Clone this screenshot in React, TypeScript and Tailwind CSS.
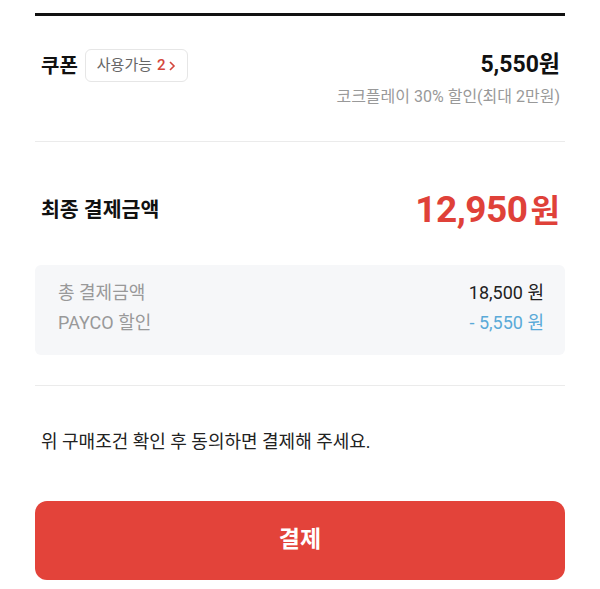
export default function App() {
  return (
    <div
      className="min-h-[589px] bg-white px-[35px] pt-[13px] text-[#111]"
      style={{ fontFamily: "Roboto, 'Noto Sans CJK KR', sans-serif" }}
    >
      <div className="h-[3px] bg-[#111]" />

      {/* Coupon */}
      <div className="pl-[6px] pr-[5px] pt-[33px]">
        <div className="flex h-[33px] items-center justify-between">
          <div className="flex items-center gap-[7px]">
            <span className="text-[20px] font-bold">쿠폰</span>
            <button className="flex h-[33px] items-center rounded-[6px] border border-[#e6e6e6] px-[11px] text-[15px] text-[#666]">
              사용가능
              <span className="ml-[5px] font-medium text-[#d4463d]">2</span>
              <svg width="8" height="12" viewBox="0 0 8 12" className="ml-[2px]">
                <path d="M2 2l4 4-4 4" fill="none" stroke="#d4463d" strokeWidth="1.6" />
              </svg>
            </button>
          </div>
          <span className="text-[23px] font-bold">5,550원</span>
        </div>
        <p className="mt-[5px] text-right text-[16px] leading-[20px] text-[#999]">
          코크플레이 30% 할인(최대 2만원)
        </p>
      </div>
      <div className="mt-[34px] h-px bg-[#ebebeb]" />

      {/* Final amount */}
      <div className="mt-[44px] flex h-[48px] items-center justify-between pl-[6px] pr-[5px]">
        <span className="text-[20.5px] font-bold">최종 결제금액</span>
        <span className="flex items-baseline font-bold text-[#df4139]">
          <span className="text-[37px] tracking-[-0.5px]">12,950</span>
          <span className="ml-[3px] text-[32px]">원</span>
        </span>
      </div>

      <div className="mt-[31px] rounded-[6px] bg-[#f6f7f9] pb-[20px] pl-[23px] pr-[21px] pt-[16px] text-[18px] leading-[24px]">
        <div className="flex justify-between">
          <span className="text-[#999]">총 결제금액</span>
          <span className="text-[#222]">18,500 원</span>
        </div>
        <div className="mt-[6px] flex justify-between">
          <span className="text-[#999]">PAYCO 할인</span>
          <span className="text-[#5aaad8]">- 5,550 원</span>
        </div>
      </div>
      <div className="mt-[30px] h-px bg-[#ebebeb]" />

      <p className="mt-[44px] px-[6px] text-[18px] leading-[24px] text-[#222]">
        위 구매조건 확인 후 동의하면 결제해 주세요.
      </p>

      <button className="mt-[47px] flex h-[79px] w-full items-center justify-center rounded-[12px] bg-[#e3433a] text-[23px] font-bold text-white">
        결제
      </button>
    </div>
  );
}
